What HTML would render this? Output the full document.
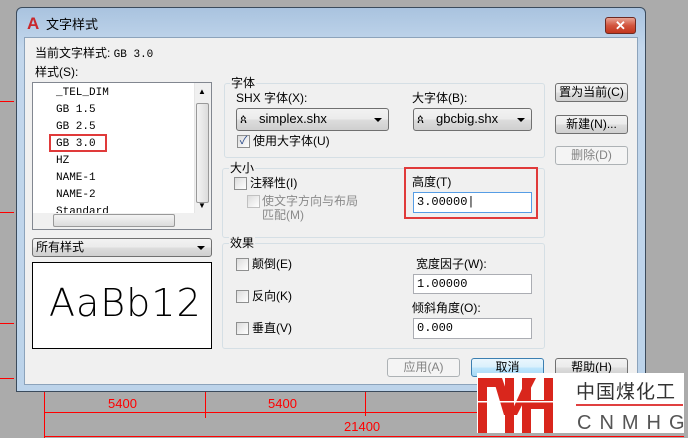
<!DOCTYPE html>
<html><head><meta charset="utf-8"><style>
*{margin:0;padding:0;box-sizing:border-box}
body{width:688px;height:438px;background:#ababab;position:relative;overflow:hidden;font-family:"Liberation Sans","Noto Sans CJK SC",sans-serif;font-size:12px;color:#000}
.a{position:absolute;white-space:nowrap;line-height:14px}
.mono{font-family:"Liberation Mono","Noto Sans CJK SC",monospace;font-size:11px}
.grp{position:absolute;border:1px solid #d5dfe5;border-radius:3px}
.gl{position:absolute;background:#f0f0f0;padding:0 1px;line-height:14px;font-size:12px}
.btn{position:absolute;border:1px solid #707070;border-radius:3px;background:linear-gradient(#f2f2f2,#ebebeb 50%,#dddddd 51%,#cfcfcf);text-align:center;line-height:16px;font-size:12px}
.dis{border-color:#adb2b5;color:#838383;background:#f4f4f4}
.cb{position:absolute;width:13px;height:13px;border:1px solid #8e8f8f;background:linear-gradient(135deg,#dcdcdc,#fff)}
.inp{position:absolute;background:#fff;border:1px solid #abadb3;font-family:"Liberation Mono",monospace;font-size:12px;padding-left:3px;line-height:18px}
.combo{position:absolute;border:1px solid #707070;border-radius:3px;background:linear-gradient(#f2f2f2,#ebebeb 50%,#dddddd 51%,#cfcfcf);font-size:13px;line-height:20px}
.arr{position:absolute;right:6px;top:9px;width:0;height:0;border-left:4px solid transparent;border-right:4px solid transparent;border-top:4px solid #000}
.r{position:absolute;background:#f00}
.rt{position:absolute;color:#f00;font-size:13px;line-height:14px}
.li{position:absolute;left:23px;font-family:"Liberation Mono",monospace;font-size:11px;line-height:14px}
</style></head><body>
<div class="r" style="left:0;top:101px;width:14px;height:1px"></div>
<div class="r" style="left:0;top:212px;width:14px;height:1px"></div>
<div class="r" style="left:0;top:323px;width:14px;height:1px"></div>
<div class="r" style="left:0;top:378px;width:14px;height:1px"></div>
<div class="r" style="left:44px;top:392px;width:1px;height:46px"></div>
<div class="r" style="left:205px;top:392px;width:1px;height:26px"></div>
<div class="r" style="left:365px;top:392px;width:1px;height:24px"></div>
<div class="r" style="left:44px;top:412px;width:440px;height:1px"></div>
<div class="r" style="left:44px;top:436px;width:640px;height:1px"></div>
<div class="rt a" style="left:108px;top:397px">5400</div>
<div class="rt a" style="left:268px;top:397px">5400</div>
<div class="rt a" style="left:344px;top:420px">21400</div>

<!-- dialog -->
<div style="position:absolute;left:16px;top:7px;width:286px;height:385px;width:286px"></div>
<div style="position:absolute;left:16px;top:7px;width:286px;height:0"></div>
<div style="position:absolute;left:16px;top:7px;width:286px"></div>
<div style="position:absolute;left:16px;top:7px;width:286px"></div>
<div style="position:absolute;left:16px;top:7px;width:286px"></div>
<div style="position:absolute;left:16px;top:7px;width:630px;height:385px;background:linear-gradient(#a9c3df,#c3d7ec 40px,#bcd3ea);border:1px solid #3b4b5c;border-radius:6px 6px 0 0"></div>
<div style="position:absolute;left:24px;top:37px;width:614px;height:348px;background:#f0f0f0;border:1px solid #8ca3bb"></div>
<!-- title -->
<div class="a" style="left:27px;top:16px;width:15px;height:16px;color:#c8282c;font-weight:bold;font-size:17px;line-height:16px">A</div>
<div class="a" style="left:46px;top:18px;font-size:13px">文字样式</div>
<div style="position:absolute;left:605px;top:17px;width:31px;height:17px;border:1px solid #6d2a22;border-radius:3px;background:linear-gradient(#e8a494,#d2553e 50%,#c2361d);color:#fff;text-align:center;font-weight:bold;font-size:13px;line-height:15px">✕</div>

<div class="a" style="left:35px;top:46px">当前文字样式: <span class="mono">GB 3.0</span></div>
<div class="a" style="left:35px;top:65px">样式(S):</div>
<!-- list -->
<div style="position:absolute;left:32px;top:82px;width:180px;height:148px;background:#fff;border:1px solid #828790;overflow:hidden">
<div class="li" style="top:3px">_TEL_DIM</div>
<div class="li" style="top:20px">GB 1.5</div>
<div class="li" style="top:37px">GB 2.5</div>
<div class="li" style="top:54px">GB 3.0</div>
<div class="li" style="top:71px">HZ</div>
<div class="li" style="top:88px">NAME-1</div>
<div class="li" style="top:105px">NAME-2</div>
<div class="li" style="top:122px">Standard</div>
<div style="position:absolute;left:161px;top:0;width:17px;height:130px;background:#f0f0f0;border-left:1px solid #e6e6e6"></div>
<div style="position:absolute;left:163px;top:20px;width:13px;height:100px;border:1px solid #999;border-radius:2px;background:linear-gradient(90deg,#f3f3f3,#dcdcdc)"></div>
<div class="a" style="left:165px;top:2px;font-size:8px">▲</div>
<div class="a" style="left:165px;top:116px;font-size:8px">▼</div>
<div style="position:absolute;left:0;top:130px;width:178px;height:16px;background:#f0f0f0"></div>
<div style="position:absolute;left:20px;top:131px;width:122px;height:13px;border:1px solid #999;border-radius:2px;background:linear-gradient(#f3f3f3,#dcdcdc)"></div>
</div>
<div style="position:absolute;left:49px;top:134px;width:58px;height:18px;border:2px solid #e03a3a"></div>
<!-- all styles combo -->
<div class="combo" style="left:32px;top:238px;width:180px;height:19px;line-height:17px;font-size:12px;padding-left:3px">所有样式<div class="arr" style="top:7px"></div></div>
<div style="position:absolute;left:32px;top:262px;width:180px;height:87px;background:#fff;border:1px solid #000"></div>
<div class="a" style="left:49px;top:283px;font-size:38px;line-height:40px;font-weight:100;letter-spacing:1px;color:#000;-webkit-text-stroke:0;font-family:'DejaVu Sans',sans-serif;font-weight:200">AaBb12</div>

<!-- 字体 group -->
<div class="grp" style="left:224px;top:83px;width:321px;height:75px"></div>
<div class="gl" style="left:230px;top:76px">字体</div>
<div class="a" style="left:236px;top:91px">SHX 字体(X):</div>
<div class="combo" style="left:236px;top:108px;width:153px;height:23px;padding-left:22px">simplex.shx<div class="arr"></div></div>
<div class="a" style="left:240px;top:112px;font-size:12px">ጰ</div>
<div class="cb" style="left:237px;top:135px;color:#2a4a8a;font-size:11px;line-height:11px;text-align:center">✓</div>
<div class="a" style="left:253px;top:134px">使用大字体(U)</div>
<div class="a" style="left:412px;top:91px">大字体(B):</div>
<div class="combo" style="left:413px;top:108px;width:119px;height:23px;padding-left:22px">gbcbig.shx<div class="arr"></div></div>
<div class="a" style="left:417px;top:112px;font-size:12px">ጰ</div>

<!-- 大小 group -->
<div class="grp" style="left:222px;top:168px;width:323px;height:70px"></div>
<div class="gl" style="left:229px;top:161px">大小</div>
<div class="cb" style="left:234px;top:177px"></div>
<div class="a" style="left:250px;top:176px">注释性(I)</div>
<div class="cb" style="left:247px;top:195px;border-color:#c0c0c0"></div>
<div class="a" style="left:262px;top:194px;color:#8a8a8a">使文字方向与布局</div>
<div class="a" style="left:262px;top:208px;color:#8a8a8a">匹配(M)</div>
<div style="position:absolute;left:404px;top:167px;width:134px;height:52px;border:2px solid #e03a3a;background:#f0f0f0"></div>
<div class="a" style="left:412px;top:175px">高度(T)</div>
<div class="inp" style="left:413px;top:192px;width:119px;height:21px;border-color:#569de5">3.00000|</div>

<!-- 效果 group -->
<div class="grp" style="left:222px;top:243px;width:323px;height:106px"></div>
<div class="gl" style="left:229px;top:236px">效果</div>
<div class="cb" style="left:236px;top:258px"></div><div class="a" style="left:252px;top:257px">颠倒(E)</div>
<div class="cb" style="left:236px;top:290px"></div><div class="a" style="left:252px;top:289px">反向(K)</div>
<div class="cb" style="left:236px;top:322px"></div><div class="a" style="left:252px;top:321px">垂直(V)</div>
<div class="a" style="left:416px;top:257px">宽度因子(W):</div>
<div class="inp" style="left:413px;top:274px;width:119px;height:20px">1.00000</div>
<div class="a" style="left:412px;top:301px">倾斜角度(O):</div>
<div class="inp" style="left:413px;top:318px;width:119px;height:21px">0.000</div>

<!-- right buttons -->
<div class="btn" style="left:555px;top:83px;width:73px;height:19px">置为当前(C)</div>
<div class="btn" style="left:555px;top:115px;width:73px;height:19px">新建(N)...</div>
<div class="btn dis" style="left:555px;top:146px;width:73px;height:19px">删除(D)</div>
<div class="btn dis" style="left:387px;top:358px;width:73px;height:19px">应用(A)</div>
<div class="btn" style="left:471px;top:358px;width:73px;height:19px;border-color:#3c7fb1;background:linear-gradient(#eaf6fd,#d9f0fc 50%,#bee6fd 51%,#a7d9f5)">取消</div>
<div class="btn" style="left:555px;top:358px;width:73px;height:19px">帮助(H)</div>

<!-- logo -->
<div style="position:absolute;left:477px;top:373px;width:207px;height:60px;background:#fff"></div>
<svg style="position:absolute;left:477px;top:373px" width="207" height="60" viewBox="0 0 207 60">
<g fill="#d9261c">
<rect x="1" y="5" width="9" height="55"/>
<rect x="1" y="5" width="22" height="9"/>
<polygon points="16,5 25,5 33,28 33,42 27,42"/>
<rect x="28" y="5" width="9" height="55"/>
<polygon points="50,5 59,5 40,42 33,42"/>
<rect x="45" y="5" width="9" height="55"/>
<rect x="67" y="5" width="9" height="55"/>
<rect x="45" y="27" width="31" height="9"/>
</g>
<rect x="0" y="28" width="80" height="1.5" fill="#fff"/>
<rect x="99" y="31" width="107" height="2" fill="#e04040"/>
<text x="99" y="25" font-family="Noto Sans CJK SC,sans-serif" font-size="19" fill="#333" letter-spacing="1">中国煤化工</text>
<text x="100" y="56" font-family="Liberation Sans,sans-serif" font-size="20" fill="#555" letter-spacing="8">CNMHG</text>
</svg>
</body></html>
